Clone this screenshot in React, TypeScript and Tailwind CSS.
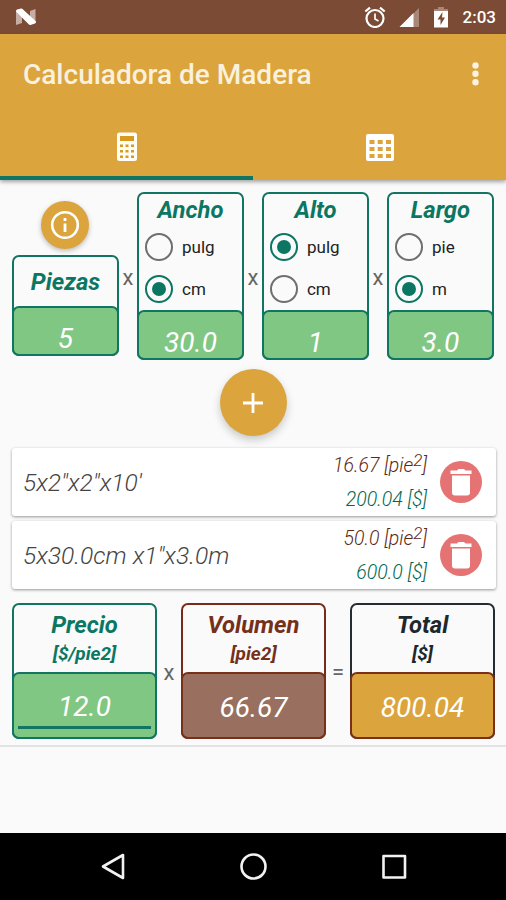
import { useState } from 'react';

const piezas = [
  { id: 1, desc: `5x2"x2"x10'`, volumen: '16.67', precio: '200.04' },
  { id: 2, desc: `5x30.0cm x1"x3.0m`, volumen: '50.0', precio: '600.0' },
];

const Radio = ({ label, checked, onClick }: { label: string; checked: boolean; onClick: () => void }) => (
  <button onClick={onClick} className="flex h-[42px] items-center gap-[9px] pl-[6px]">
    <span className={`flex size-7 items-center justify-center rounded-full border-[2.5px] ${checked ? 'border-[#0b7763]' : 'border-[#6f6f6f]'}`}>
      {checked && <span className="size-[14px] rounded-full bg-[#0b7763]" />}
    </span>
    <span className="pt-px text-[17px] leading-none text-[#222]">{label}</span>
  </button>
);

const Medida = ({ title, units, initial, value }: { title: string; units: string[]; initial: string; value: string }) => {
  const [unit, setUnit] = useState(initial);
  return (
    <div className="flex h-[168px] w-[107px] flex-col rounded-[7px] border-2 border-[#127561]">
      <h2 className="h-[32px] pt-[2px] text-center text-[23.8px] leading-[28px] font-bold italic text-[#0b7763]">{title}</h2>
      {units.map((u) => <Radio key={u} label={u} checked={unit === u} onClick={() => setUnit(u)} />)}
      <div className="-mx-[2px] mt-auto -mb-[2px] h-[50px] rounded-[7px] border-2 border-[#127561] bg-[#81c784] pt-[13px] text-center text-[28px] leading-[36px] italic text-white">{value}</div>
    </div>
  );
};

const Signo = ({ children, className }: { children: string; className: string }) => (
  <span className={`text-center text-[22px] leading-6 text-[#666] ${className}`}>{children}</span>
);

const StatusBar = () => (
  <div className="flex h-[34px] items-center bg-[#7b4b36] pr-[10px] pl-[15px] text-white">
    <svg width="22" height="18" viewBox="0 0 22 18">
      <path d="M1 3L7 6V15L1 17Z" fill="#c7aea4" />
      <path d="M15 3L20.5 1V15L15 12Z" fill="#c7aea4" />
      <path d="M2.5 3L6.5 2L19.5 14L15 15.500Z" fill="#fff" stroke="#fff" strokeWidth="3" strokeLinejoin="round" />
    </svg>
    <svg className="ml-auto" width="22" height="22" viewBox="0 0 22 22" fill="none" stroke="#fff">
      <circle cx="11" cy="12.5" r="8.5" strokeWidth="2.2" />
      <path d="M11 7.5V13L14.5 15" strokeWidth="1.7" />
      <path d="M1.3 5.5L6 1.6M16 1.6L20.7 5.5" strokeWidth="2.2" />
    </svg>
    <svg className="ml-[13px]" width="20" height="20" viewBox="0 0 20 20">
      <path d="M20 1V20H1Z" fill="#a88779" />
      <path d="M14.5 6V20H0.5Z" fill="#fff" />
    </svg>
    <svg className="ml-[14px]" width="16" height="22" viewBox="0 0 16 22">
      <path d="M5 1H11V3H15V6H1V3H5Z" fill="#a88779" />
      <path d="M1 5H15V21.5H1Z" fill="#fff" />
      <path d="M9.5 6L4.5 13.5H7.5V19L12 11.5H9Z" fill="#7b4b36" />
    </svg>
    <span className="ml-[14px] pt-[2px] text-[17px] font-medium">2:03</span>
  </div>
);

const Header = () => (
  <header className="relative z-10 bg-[#dba43d] shadow-[0_2px_4px_rgba(0,0,0,0.35)]">
    <div className="flex h-[79px] items-center pr-[27px] pl-[23px]">
      <h1 className="pt-[2px] text-[28px] font-medium text-[#f9f1de]">Calculadora de Madera</h1>
      <svg className="ml-auto" width="7" height="24" viewBox="0 0 7 24" fill="#fbf3e2">
        <circle cx="3.5" cy="3.5" r="3.2" />
        <circle cx="3.5" cy="11.8" r="3.2" />
        <circle cx="3.5" cy="20.3" r="3.2" />
      </svg>
    </div>
    <div className="flex h-[67px]">
      <button className="flex w-[253px] justify-center border-b-4 border-[#127561] pt-[19px]">
        <svg width="22" height="30" viewBox="0 0 22 30">
          <rect x="1" y="0.5" width="20" height="28.5" rx="2.5" fill="#fffdf5" />
          <path d="M4 4H18V9H4ZM4 12.5H7V15H4ZM9.5 12.5H12.5V15H9.5ZM15 12.5H18V15H15ZM4 18H7V20.5H4ZM9.5 18H12.5V20.5H9.5ZM15 18H18V20.5H15ZM4 23.5H7V26H4ZM9.5 23.5H12.5V26H9.5ZM15 23.5H18V26H15Z" fill="#d69b20" />
        </svg>
      </button>
      <button className="flex flex-1 justify-center pt-[21px]">
        <svg width="28" height="28" viewBox="0 0 28 28">
          <rect x="0" y="0" width="28" height="27" rx="2" fill="#fff" />
          <path d="M3.5 6H8.5V10H3.5ZM11.7 6H16.7V10H11.7ZM20 6H25V10H20ZM3.5 13H8.5V17H3.5ZM11.7 13H16.7V17H11.7ZM20 13H25V17H20ZM3.5 20H8.5V24H3.5ZM11.7 20H16.7V24H11.7ZM20 20H25V24H20Z" fill="#dba43d" />
        </svg>
      </button>
    </div>
  </header>
);

export default function App() {
  const [items, setItems] = useState(piezas);

  return (
    <div className="flex h-[900px] w-[506px] flex-col overflow-hidden bg-[#fafafa] font-[Roboto,sans-serif]">
      <StatusBar />
      <Header />

      <section className="flex h-[180px] justify-between pt-[12px] pr-[12px] pl-[12px]">
        <div className="flex w-[107px] flex-col items-center">
          <button className="mt-[9px] mr-px flex size-12 items-center justify-center rounded-full bg-[#dba43d] shadow-[0_2px_5px_rgba(0,0,0,0.25)]">
            <svg width="30" height="30" viewBox="0 0 30 30" fill="none" stroke="#fff">
              <circle cx="15" cy="15" r="12.8" strokeWidth="2.6" />
              <path d="M15 13.5V22M15 8V11" strokeWidth="2.8" />
            </svg>
          </button>
          <div className="mt-[6px] flex h-[101px] w-full flex-col rounded-[7px] border-2 border-[#127561]">
            <h2 className="pt-[11px] text-center text-[23.8px] leading-[28px] font-bold italic text-[#0b7763]">Piezas</h2>
            <div className="-mx-[2px] mt-auto -mb-[2px] h-[50px] rounded-[7px] border-2 border-[#127561] bg-[#81c784] pt-[13px] text-center text-[28px] leading-[36px] italic text-white">5</div>
          </div>
        </div>
        <Signo className="pt-[74px]">x</Signo>
        <Medida title="Ancho" units={['pulg', 'cm']} initial="cm" value="30.0" />
        <Signo className="pt-[74px]">x</Signo>
        <Medida title="Alto" units={['pulg', 'cm']} initial="pulg" value="1" />
        <Signo className="pt-[74px]">x</Signo>
        <Medida title="Largo" units={['pie', 'm']} initial="m" value="3.0" />
      </section>

      <div className="flex h-[88px] justify-center pt-[9px]">
        <button className="flex size-[67px] items-center justify-center rounded-full bg-[#dba43d] shadow-[0_4px_8px_rgba(0,0,0,0.2)]">
          <svg width="20" height="20" viewBox="0 0 20 20" stroke="#fff" strokeWidth="2.8">
            <path d="M10 0V20M0 10H20" />
          </svg>
        </button>
      </div>

      <ul className="flex h-[155px] flex-col gap-[5px] pr-[10px] pl-[12px]">
        {items.map((item) => (
          <li key={item.id} className="flex h-[68px] items-center rounded-[3px] bg-white pr-[14px] pl-[11px] shadow-[0_1px_3px_rgba(0,0,0,0.4)]">
            <span className="pt-[2px] text-[24.6px] font-light italic text-[#444]">{item.desc}</span>
            <div className="ml-auto pt-[2px] text-right text-[19.5px] leading-[34px] font-light italic">
              <p className="h-[34px] text-[#5f2812]">{item.volumen} [pie<sup className="-top-[6px] text-[17px]">2</sup>]</p>
              <p className="h-[34px] text-[#00684f]">{item.precio} [$]</p>
            </div>
            <button onClick={() => setItems(items.filter((i) => i.id !== item.id))} className="ml-[13px]">
              <svg width="42" height="42" viewBox="0 0 42 42">
                <circle cx="21" cy="21" r="21" fill="#e57373" />
                <path d="M10.5 9.5H17L18.5 8H24L25.5 9.5H31.5V13H10.5Z" fill="#fff" />
                <path d="M12 14.5H30V31.5Q30 34.5 27 34.5H15Q12 34.5 12 31.5Z" fill="#fff" />
              </svg>
            </button>
          </li>
        ))}
      </ul>

      <section className="flex h-[144px] border-b-2 border-[#e3e3e3] pr-[11px] pl-[12px]">
        <div className="flex h-[136px] flex-1 flex-col rounded-[7px] border-2 border-[#127561] text-center italic">
          <h2 className="pt-[6px] text-[23.8px] leading-[28px] font-bold text-[#0b7763]">Precio</h2>
          <p className="pt-px text-[19px] leading-[28px] font-bold text-[#0b7763]">[$/pie2]</p>
          <div className="-mx-[2px] mt-auto -mb-[2px] h-[67px] rounded-[7px] border-2 border-[#127561] bg-[#81c784] px-[4px] pt-[12px] text-[28px] text-white">
            <div className="h-[43px] border-b-[3px] border-[#127561] leading-[41px]">12.0</div>
          </div>
        </div>
        <Signo className="w-[24px] pt-[58px]">x</Signo>
        <div className="flex h-[136px] flex-1 flex-col rounded-[7px] border-2 border-[#7a2a1a] text-center italic">
          <h2 className="pt-[6px] text-[23.8px] leading-[28px] font-bold text-[#74301b]">Volumen</h2>
          <p className="pt-px text-[19px] leading-[28px] font-bold text-[#74301b]">[pie2]</p>
          <div className="-mx-[2px] mt-auto -mb-[2px] h-[67px] rounded-[7px] border-2 border-[#7a2f18] bg-[#996f5f] pt-[14px] text-[28px] leading-[39px] text-white">66.67</div>
        </div>
        <Signo className="w-[24px] pt-[57px]">=</Signo>
        <div className="flex h-[136px] flex-1 flex-col rounded-[7px] border-2 border-[#252b2e] text-center italic">
          <h2 className="pt-[6px] text-[23.8px] leading-[28px] font-bold text-[#20272b]">Total</h2>
          <p className="pt-px text-[19px] leading-[28px] font-bold text-[#20272b]">[$]</p>
          <div className="-mx-[2px] mt-auto -mb-[2px] h-[67px] rounded-[7px] border-2 border-[#7a2f18] bg-[#dba43d] pt-[14px] text-[28px] leading-[39px] text-white">800.04</div>
        </div>
      </section>

      <nav className="mt-auto flex h-[67px] items-center bg-black pl-[100px]">
        <svg width="310" height="30" viewBox="0 0 310 30" fill="none" stroke="#f2f2f2" strokeWidth="2.6" strokeLinejoin="round">
          <path d="M23 3V26L3 14.5Z" />
          <circle cx="153.5" cy="14.5" r="12" />
          <path d="M283.5 4H305V25.5H283.5Z" />
        </svg>
      </nav>
    </div>
  );
}
